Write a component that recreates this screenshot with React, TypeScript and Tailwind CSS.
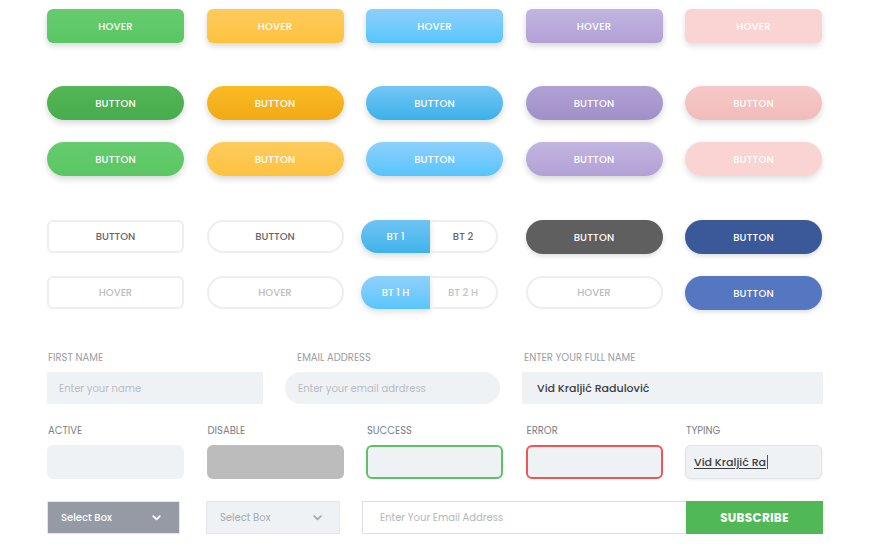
import React from "react";

const font = { fontFamily: '"Poppins", "Open Sans", "Liberation Sans", sans-serif' };

function Chevron({ color }: { color: string }) {
  return (
    <svg width="9" height="6" viewBox="0 0 9 6" fill="none">
      <path d="M1.2 1.2 L4.5 4.4 L7.8 1.2" stroke={color} strokeWidth="1.8" strokeLinecap="round" strokeLinejoin="round" />
    </svg>
  );
}

const btn = "h-[34px] flex items-center justify-center text-[10px] font-medium tracking-[0.2px] text-white";

export default function App() {
  return (
    <div className="w-[871px] h-[544px] bg-white overflow-hidden pl-[47px] pt-[9px]" style={font}>
      {/* Row 1 hover */}
      <div className="grid grid-cols-[repeat(5,137px)] gap-x-[22.5px]">
        <div className={`${btn} rounded-[6px] bg-gradient-to-b from-[#66cc6f] to-[#5ac663] shadow-[0_3px_6px_rgba(0,0,0,0.16)]`}>HOVER</div>
        <div className={`${btn} rounded-[6px] bg-gradient-to-b from-[#fdcb5c] to-[#fdc33f] shadow-[0_3px_6px_rgba(0,0,0,0.16)]`}>HOVER</div>
        <div className={`${btn} rounded-[6px] bg-gradient-to-b from-[#8dd0fc] to-[#55c5fd] shadow-[0_3px_6px_rgba(0,0,0,0.16)]`}>HOVER</div>
        <div className={`${btn} rounded-[6px] bg-gradient-to-b from-[#c2b5e0] to-[#b2a1d6] shadow-[0_3px_6px_rgba(0,0,0,0.16)]`}>HOVER</div>
        <div className={`${btn} rounded-[6px] bg-[#f9d4d3] shadow-[0_3px_6px_rgba(0,0,0,0.13)]`}>HOVER</div>
      </div>

      {/* Row 2 pills */}
      <div className="grid grid-cols-[repeat(5,137px)] gap-x-[22.5px] mt-[43px]">
        <div className={`${btn} rounded-full bg-gradient-to-b from-[#53b657] to-[#47ac4d] shadow-[0_3px_6px_rgba(0,0,0,0.16)]`}>BUTTON</div>
        <div className={`${btn} rounded-full bg-gradient-to-b from-[#fbbb25] to-[#f0aa12] shadow-[0_3px_6px_rgba(0,0,0,0.16)]`}>BUTTON</div>
        <div className={`${btn} rounded-full bg-gradient-to-b from-[#72c6f6] to-[#38b1ea] shadow-[0_3px_6px_rgba(0,0,0,0.16)]`}>BUTTON</div>
        <div className={`${btn} rounded-full bg-gradient-to-b from-[#b0a2d4] to-[#a08fc9] shadow-[0_3px_6px_rgba(0,0,0,0.16)]`}>BUTTON</div>
        <div className={`${btn} rounded-full bg-gradient-to-b from-[#f6c8c7] to-[#f1bcbb] shadow-[0_3px_6px_rgba(0,0,0,0.14)]`}>BUTTON</div>
      </div>

      {/* Row 3 pills lighter */}
      <div className="grid grid-cols-[repeat(5,137px)] gap-x-[22.5px] mt-[22px]">
        <div className={`${btn} rounded-full bg-gradient-to-b from-[#66cc6f] to-[#5ac663] shadow-[0_3px_6px_rgba(0,0,0,0.16)]`}>BUTTON</div>
        <div className={`${btn} rounded-full bg-gradient-to-b from-[#fdcb5c] to-[#fdc33f] shadow-[0_3px_6px_rgba(0,0,0,0.16)]`}>BUTTON</div>
        <div className={`${btn} rounded-full bg-gradient-to-b from-[#8dd0fc] to-[#55c5fd] shadow-[0_3px_6px_rgba(0,0,0,0.16)]`}>BUTTON</div>
        <div className={`${btn} rounded-full bg-gradient-to-b from-[#c2b5e0] to-[#b2a1d6] shadow-[0_3px_6px_rgba(0,0,0,0.16)]`}>BUTTON</div>
        <div className={`${btn} rounded-full bg-[#f9d4d3] shadow-[0_3px_6px_rgba(0,0,0,0.13)]`}>BUTTON</div>
      </div>

      {/* Row 4 outline */}
      <div className="grid grid-cols-[repeat(5,137px)] gap-x-[22.5px] mt-[44px]">
        <div className="h-[33px] flex items-center justify-center text-[10px] font-medium text-[#666] rounded-[6px] border-2 border-[#eeeeee]">BUTTON</div>
        <div className="h-[33px] flex items-center justify-center text-[10px] font-medium text-[#666] rounded-full border-2 border-[#eeeeee]">BUTTON</div>
        <div className="h-[33px] w-[137px] -ml-[5px] flex">
          <div className="w-[69px] flex items-center justify-center text-[10px] font-medium text-white bg-gradient-to-b from-[#6fc4f4] to-[#3cb3ea] rounded-l-full shadow-[0_3px_6px_rgba(0,0,0,0.15)]">BT 1</div>
          <div className="flex-1 flex items-center justify-center text-[10px] font-medium text-[#666] border-2 border-l-0 border-[#eeeeee] rounded-r-full">BT 2</div>
        </div>
        <div className={`${btn} h-[33px] rounded-full bg-[#5f5f5f] shadow-[0_2px_5px_rgba(0,0,0,0.14)]`}>BUTTON</div>
        <div className={`${btn} h-[33px] rounded-full bg-[#3b5898] shadow-[0_2px_5px_rgba(0,0,0,0.14)]`}>BUTTON</div>
      </div>

      {/* Row 5 hover outline */}
      <div className="grid grid-cols-[repeat(5,137px)] gap-x-[22.5px] mt-[22px]">
        <div className="h-[33px] flex items-center justify-center text-[10px] font-medium text-[#bdbdbd] rounded-[6px] border-2 border-[#eeeeee]">HOVER</div>
        <div className="h-[33px] flex items-center justify-center text-[10px] font-medium text-[#bdbdbd] rounded-full border-2 border-[#eeeeee]">HOVER</div>
        <div className="h-[33px] w-[137px] -ml-[5px] flex">
          <div className="w-[69px] flex items-center justify-center text-[10px] font-medium text-white bg-gradient-to-b from-[#8fd0fb] to-[#58c6fd] rounded-l-full shadow-[0_3px_6px_rgba(0,0,0,0.13)]">BT 1 H</div>
          <div className="flex-1 flex items-center justify-center text-[10px] font-medium text-[#c4c4c4] border-2 border-l-0 border-[#eeeeee] rounded-r-full">BT 2 H</div>
        </div>
        <div className="h-[33px] flex items-center justify-center text-[10px] font-medium text-[#b8bcc4] rounded-full border-2 border-[#eeeeee]">HOVER</div>
        <div className={`${btn} h-[33px] rounded-full bg-[#5576c0] shadow-[0_2px_5px_rgba(0,0,0,0.14)]`}>BUTTON</div>
      </div>

      {/* Form row 1 */}
      <div className="flex mt-[41px]">
        <div className="w-[216px] flex flex-col">
          <div className="text-[10px] text-[#9a9ea6] leading-[14px] pl-[1px]">FIRST NAME</div>
          <div className="mt-[7px] h-[32px] bg-[#eff2f5] flex items-center pl-[12px] text-[10px] text-[#b9bcc3]">Enter your name</div>
        </div>
        <div className="w-[215px] ml-[22px] flex flex-col">
          <div className="text-[10px] text-[#9a9ea6] leading-[14px] pl-[12px]">EMAIL ADDRESS</div>
          <div className="mt-[7px] h-[32px] bg-[#eff2f5] rounded-full flex items-center pl-[13px] text-[10px] text-[#b9bcc3]">Enter your email adrdress</div>
        </div>
        <div className="w-[301px] ml-[22px] flex flex-col">
          <div className="text-[10px] text-[#9a9ea6] leading-[14px] pl-[2px]">ENTER YOUR FULL NAME</div>
          <div className="mt-[7px] h-[32px] bg-[#eff2f5] flex items-center pl-[15px] text-[11px] font-medium text-[#3a3d44]">Vid Kraljić Radulović</div>
        </div>
      </div>

      {/* Form row 2 */}
      <div className="grid grid-cols-[repeat(5,137px)] gap-x-[22.5px] mt-[20px]">
        <div className="flex flex-col">
          <div className="text-[10px] text-[#7b7f87] leading-[14px] pl-[1px]">ACTIVE</div>
          <div className="mt-[7px] h-[34px] bg-[#eff2f5] rounded-[6px]" />
        </div>
        <div className="flex flex-col">
          <div className="text-[10px] text-[#7b7f87] leading-[14px] pl-[1px]">DISABLE</div>
          <div className="mt-[7px] h-[34px] bg-[#bcbcbc] rounded-[6px]" />
        </div>
        <div className="flex flex-col">
          <div className="text-[10px] text-[#7b7f87] leading-[14px] pl-[1px]">SUCCESS</div>
          <div className="mt-[7px] h-[34px] bg-[#eff2f5] rounded-[6px] border-2 border-[#5cc266]" />
        </div>
        <div className="flex flex-col">
          <div className="text-[10px] text-[#7b7f87] leading-[14px] pl-[1px]">ERROR</div>
          <div className="mt-[7px] h-[34px] bg-[#eff2f5] rounded-[6px] border-2 border-[#f05454]" />
        </div>
        <div className="flex flex-col">
          <div className="text-[10px] text-[#7b7f87] leading-[14px] pl-[1px]">TYPING</div>
          <div className="mt-[7px] h-[34px] bg-[#eff2f5] rounded-[6px] border border-[#e1e4e8] shadow-[0_1px_3px_rgba(0,0,0,0.08)] flex items-center pl-[8px]">
            <span className="text-[11px] font-medium text-[#3a3d44] underline underline-offset-2 decoration-[#3a3d44]">Vid Kraljić Ra</span>
            <span className="ml-[1px] w-px h-[14px] bg-[#555]" />
          </div>
        </div>
      </div>

      {/* Row 3 selects + subscribe */}
      <div className="flex mt-[22px]">
        <div className="w-[133px] h-[33px] bg-[#959aa5] border border-[#e3e6ea] flex items-center justify-between pl-[13px] pr-[18px] text-[10px] font-medium text-white">
          <span>Select Box</span>
          <Chevron color="#ffffff" />
        </div>
        <div className="w-[134px] h-[33px] ml-[26px] bg-[#eff2f5] border border-[#e3e6ea] flex items-center justify-between pl-[13px] pr-[17px] text-[10px] text-[#a6aab2]">
          <span>Select Box</span>
          <Chevron color="#a6aab2" />
        </div>
        <div className="ml-[22px] flex h-[33px]">
          <div className="w-[324px] border border-[#dde1e6] border-r-0 flex items-center pl-[17px] text-[10px] text-[#b3b7be]">Enter Your Email Address</div>
          <div className="w-[137px] bg-[#50b956] flex items-center justify-center text-[12px] font-bold text-white tracking-[0.3px]">SUBSCRIBE</div>
        </div>
      </div>
    </div>
  );
}
